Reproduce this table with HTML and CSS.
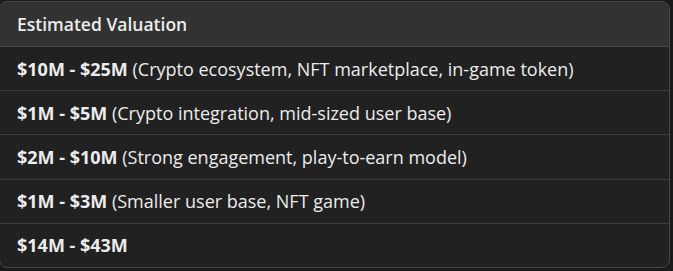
FILE: index.html
```html
<!DOCTYPE html>
<html>
<head>
<meta charset="utf-8">
<link rel="stylesheet" href="styles.css">
</head>
<body>
<div class="wrap">
  <table class="val">
    <thead>
      <tr><th>Estimated Valuation</th></tr>
    </thead>
    <tbody>
      <tr><td><strong>$10M - $25M</strong> (Crypto ecosystem, NFT marketplace, in-game token)</td></tr>
      <tr><td><strong>$1M - $5M</strong> (Crypto integration, mid-sized user base)</td></tr>
      <tr><td><strong>$2M - $10M</strong> (Strong engagement, play-to-earn model)</td></tr>
      <tr><td><strong>$1M - $3M</strong> (Smaller user base, NFT game)</td></tr>
      <tr><td><strong>$14M - $43M</strong></td></tr>
    </tbody>
  </table>
</div>
</body>
</html>
```
FILE: styles.css
```css
html, body {
  margin: 0;
  padding: 0;
  background: #1a1a1a;
}
body {
  font-family: "Open Sans", "Noto Sans", sans-serif;
  color: #ececec;
  font-size: 18px;
}
.wrap {
  margin-top: 1px;
  margin-left: -1px;
  width: 671px;
  height: 267px;
  box-sizing: border-box;
  border: 1px solid #474747;
  border-radius: 8px;
  overflow: hidden;
  background: #212121;
}
.val {
  width: 100%;
  border-collapse: collapse;
}
.val th {
  text-align: left;
  font-weight: 600;
  font-size: 17.5px;
  background: #323232;
  height: 44px;
  padding: 0 0 0 17px;
  border-bottom: 1px solid #474747;
}
.val td {
  height: 43.2px;
  padding: 0 0 0 17px;
  border-bottom: 1px solid #3c3c3c;
}
.val tbody tr:last-child td {
  border-bottom: none;
}
.val strong {
  font-weight: 700;
}
```
